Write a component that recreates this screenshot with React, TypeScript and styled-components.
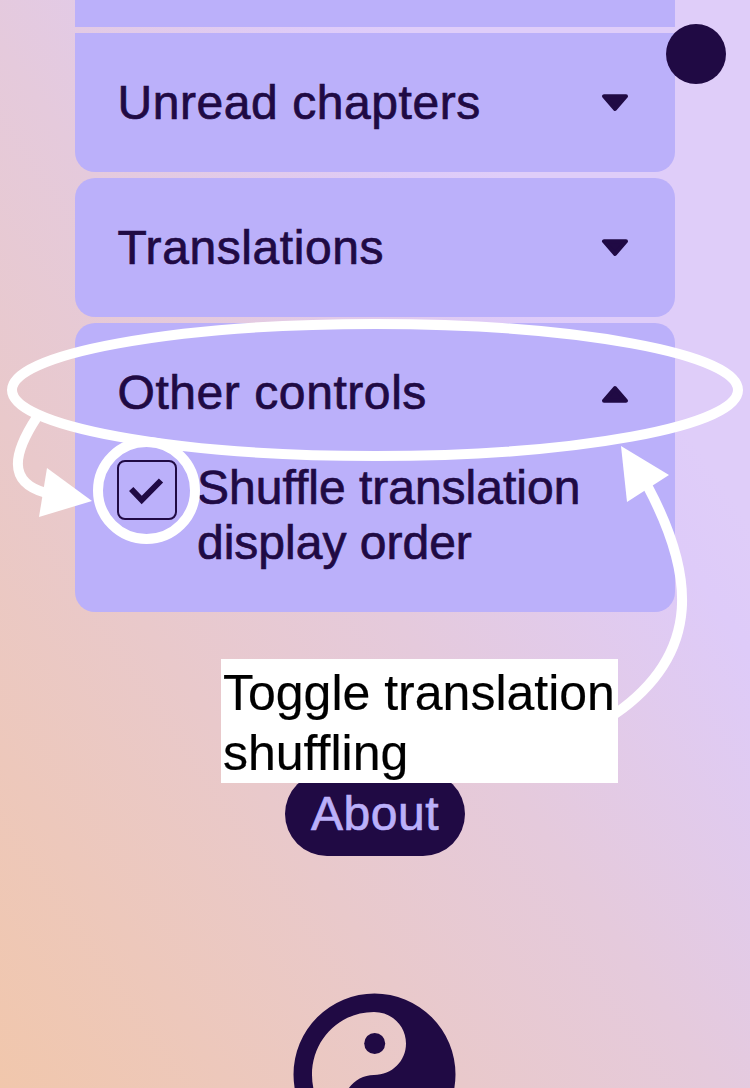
import React from "react";
import styled, { createGlobalStyle } from "styled-components";

const ink = "#200a44";
const panel = "#bbb0fa";

const GlobalStyle = createGlobalStyle`
  * { box-sizing: border-box; }
  html, body { margin: 0; padding: 0; }
  body { overflow: hidden; }
`;

const Page = styled.div`
  position: relative;
  width: 750px;
  height: 1088px;
  overflow: hidden;
  display: flex;
  flex-direction: column;
  align-items: center;
  color: ${ink};
  font-family: "Liberation Sans", Arial, sans-serif;
  font-size: 48px;
  background: linear-gradient(to top right, #f1c7ac 0%, #e9c9cb 31%, #e5cadc 48%, #decbf9 70%, #dfcdf9 76%, #dfcdf9 100%);
`;

const Accordion = styled.main`
  display: flex;
  flex-direction: column;
  gap: 6px;
  width: 600px;
`;

const PanelRemainder = styled.div`
  height: 27px;
  background: ${panel};
`;

const Panel = styled.section<{ $flatTop?: boolean }>`
  background: ${panel};
  border-radius: ${(p) => (p.$flatTop ? "0 0 20px 20px" : "20px")};
`;

const PanelHeader = styled.header`
  display: flex;
  align-items: center;
  justify-content: space-between;
  height: 139px;
  padding: 0 46px 0 42.5px;
`;

const Title = styled.h2`
  margin: 0;
  font-size: 48px;
  font-weight: 400;
  line-height: 56px;
  letter-spacing: 0.57px;
  -webkit-text-stroke: 0.7px currentColor;
  white-space: nowrap;
`;

const Caret = styled.svg<{ $open?: boolean }>`
  display: block;
  width: 28px;
  height: 18px;
  transform: ${(p) => (p.$open ? "translateY(1px) rotate(180deg)" : "none")};
`;

const Option = styled.label`
  display: flex;
  align-items: flex-start;
  gap: 20px;
  height: 150px;
  padding: 0 42px;
`;

const CheckBox = styled.span`
  display: flex;
  align-items: center;
  justify-content: center;
  flex: none;
  width: 60px;
  height: 60px;
  margin-top: -2px;
  border: 2px solid ${ink};
  border-radius: 8px;
`;

const OptionText = styled.span`
  margin-top: -2px;
  line-height: 55px;
  -webkit-text-stroke: 0.7px currentColor;
  white-space: nowrap;
`;

const AboutButton = styled.button`
  width: 180px;
  height: 84px;
  margin-top: 160px;
  padding: 0;
  flex: none;
  border: 0;
  border-radius: 42px;
  background: ${ink};
  color: ${panel};
  font: inherit;
  line-height: 84px;
  letter-spacing: 0.5px;
  -webkit-text-stroke: 0.7px currentColor;
`;

const Emblem = styled.svg`
  display: block;
  flex: none;
  width: 164px;
  height: 164px;
  margin-top: 137px;
`;

const FloatingDot = styled.div`
  position: absolute;
  top: 24px;
  left: 666px;
  width: 60px;
  height: 60px;
  border-radius: 50%;
  background: ${ink};
`;

const Annotations = styled.svg`
  position: absolute;
  inset: 0;
  width: 750px;
  height: 1088px;
  pointer-events: none;
`;

const Note = styled.p`
  position: absolute;
  left: 221px;
  top: 659px;
  width: 397px;
  height: 124px;
  margin: 0;
  padding: 4px 2px;
  background: #fff;
  color: #000;
  font-size: 50px;
  line-height: 60px;
  -webkit-text-stroke: 0.2px currentColor;
  white-space: nowrap;
`;

function CaretIcon({ open }: { open?: boolean }) {
  return (
    <Caret $open={open} viewBox="0 0 28 18">
      <path
        d="M3 2.250H25L14 14.900Z"
        fill={ink}
        stroke={ink}
        strokeWidth="4"
        strokeLinejoin="round"
      />
    </Caret>
  );
}

export default function App() {
  return (
    <>
      <GlobalStyle />
      <Page>
        <Accordion>
          <PanelRemainder />
          <Panel $flatTop>
            <PanelHeader>
              <Title>Unread chapters</Title>
              <CaretIcon />
            </PanelHeader>
          </Panel>
          <Panel>
            <PanelHeader>
              <Title>Translations</Title>
              <CaretIcon />
            </PanelHeader>
          </Panel>
          <Panel>
            <PanelHeader>
              <Title>Other controls</Title>
              <CaretIcon open />
            </PanelHeader>
            <Option>
              <CheckBox>
                <svg width="56" height="56" viewBox="0 0 56 56">
                  <path d="M12.200 27L22.700 38L42 18.500" fill="none" stroke={ink} strokeWidth="6" />
                </svg>
              </CheckBox>
              <OptionText>
                Shuffle translation
                <br />
                display order
              </OptionText>
            </Option>
          </Panel>
        </Accordion>
        <AboutButton>About</AboutButton>
        <Emblem viewBox="0 0 164 164">
          <path
            fill={ink}
            fillRule="evenodd"
            d="M81.500 0.500A81 81 0 1 1 81.500 162.500A81 81 0 1 1 81.500 0.500ZM81 19C46 19 19 47 19 82C19 117 47 145 82 145A31.500 31.500 0 0 1 50 113.500C50 96 64 82 81 82C99 82 113 68 113 50.500C113 33 99 19 81 19Z"
          />
          <circle cx="81.700" cy="50.500" r="10.500" fill={ink} />
        </Emblem>
        <FloatingDot />
        <Annotations viewBox="0 0 750 1088">
          <g fill="none" stroke="#fff" strokeWidth="10">
            <ellipse cx="375" cy="390" rx="363" ry="66" />
            <circle cx="146.500" cy="490.500" r="48.500" />
            <path d="M37 417C14 452 6 482 46 493" />
            <path d="M615 714C704 652 693 572 648 487" />
          </g>
          <path d="M92 501L47 468L39 517Z" fill="#fff" />
          <path d="M621 446L669 475L627 502Z" fill="#fff" />
        </Annotations>
        <Note>
          Toggle translation
          <br />
          shuffling
        </Note>
      </Page>
    </>
  );
}
